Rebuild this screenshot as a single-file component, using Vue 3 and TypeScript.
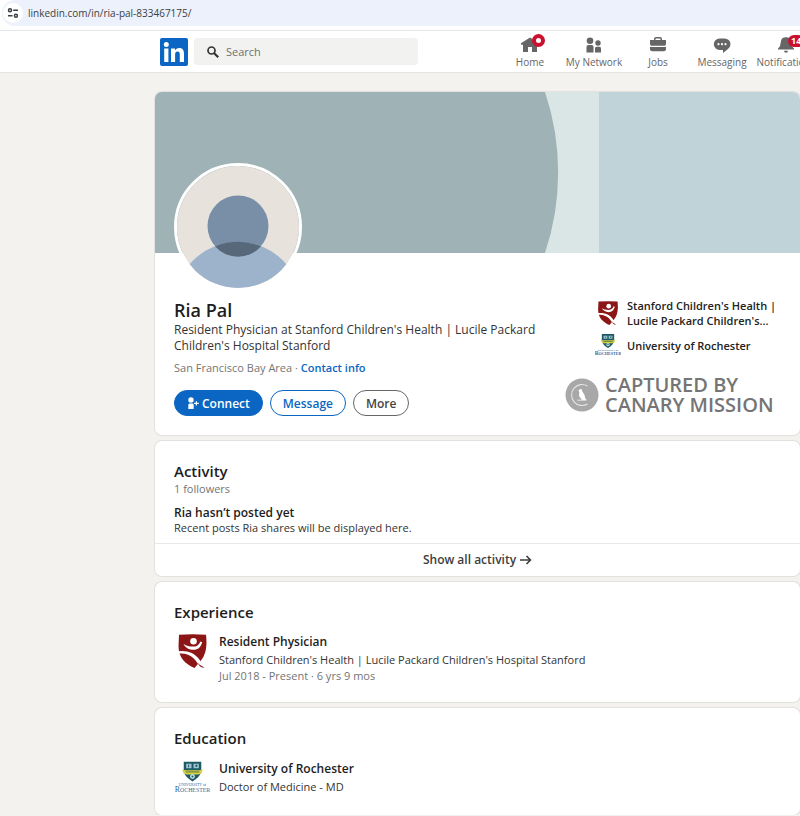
<script setup lang="ts">
import { ref } from 'vue'

interface NavItem {
  label: string
  icon: 'home' | 'network' | 'jobs' | 'messaging' | 'bell'
  badge?: string
}

const address = ref('linkedin.com/in/ria-pal-833467175/')
const query = ref('')

const navItems: NavItem[] = [
  { label: 'Home', icon: 'home', badge: '' },
  { label: 'My Network', icon: 'network' },
  { label: 'Jobs', icon: 'jobs' },
  { label: 'Messaging', icon: 'messaging' },
  { label: 'Notifications', icon: 'bell', badge: '14' },
]
</script>

<template>
  <svg class="symbols" aria-hidden="true">
    <symbol id="stanford" viewBox="0 0 30 34">
      <path fill="#8c1515" d="M1.500 .8Q15 -.2 28.500 .8C29.500 9 29.500 20 23 27L17 34C8 30 1 24 1 12z" />
      <circle cx="16" cy="7.300" r="3.300" fill="#fff" />
      <path fill="#fff" d="M6 10c3 2 6 2.600 9.500 2.600 3.500 0 6-1.500 7.500-5.200l1.700.8c-1.300 5-4.200 7.600-8.700 7.600-4.200 0-8-1.800-10-5.800z" />
      <path fill="#fff" d="M-1 17.500C8 15.500 17 18.500 21.500 25c1.700 2.500 3.500 5.500 6 7.500l-3.500 1.500c-3-2.500-5-7-8-9.800C12 20.500 6 18.500-1 20z" />
      <path fill="#8c1515" d="M20.500 29c1.800 2.200 3.800 3.200 6.500 4.300-3 .7-5.500-.8-6.500-4.300z" />
    </symbol>
    <symbol id="rochester-crest" viewBox="0 0 38 32">
      <path fill="#1d5a66" d="M10 0h18v8c0 6-4 9.500-9 12.500C14 17.500 10 14 10 8z" />
      <path fill="#9fc5d1" d="M12.500 2.500h5.500v4.500h-5.500zM20 2.500h5.500v4.500H20z" />
      <path fill="#1d5a66" d="M14.500 3.500h1v2.500h-1zM22 3.500h2v2h-2z" />
      <path fill="#d8cf45" d="M8.500 8l3 1h15l3-1-1 4-3 1.500H12.500l-3-1.500z" />
      <path fill="#6c8c3b" d="M12 10h14v1.500H12z" />
      <circle cx="19" cy="15.500" r="2.500" fill="#c7dde0" />
      <circle cx="19" cy="15.500" r="1" fill="#1d5a66" />
    </symbol>
  </svg>

  <div class="page">
    <div class="browser-bar">
      <div class="omnibox">
        <button class="site-info" type="button" aria-label="View site information">
          <svg viewBox="0 0 12 12" width="12" height="12" fill="none" stroke="#3c4043" stroke-width="1.500">
            <circle cx="3" cy="3.200" r="1.500" /><path d="M6.200 3.200H11M1 8.800h4.500" /><circle cx="8.900" cy="8.800" r="1.500" />
          </svg>
        </button>
        <input v-model="address" class="address" type="text" aria-label="Address" />
      </div>
    </div>

    <header class="site-header">
      <a class="logo" href="#" aria-label="LinkedIn">
        <svg viewBox="0 0 28 28" width="28" height="28">
          <rect width="28" height="28" rx="2" fill="#0a66c2" />
          <circle cx="6.300" cy="6.400" r="2.500" fill="#fff" />
          <path fill="#fff" d="M4.200 10.500h4.200V24H4.200zM11 10.500h4v1.900c.7-1.300 2.200-2.300 4.200-2.300 3.900 0 4.800 2.600 4.800 6.100V24h-4.200v-6.900c0-1.700-.1-3.500-2.200-3.500-2.200 0-2.500 1.700-2.500 3.400v7H11z" />
        </svg>
      </a>
      <label class="search">
        <svg viewBox="0 0 12 12" width="12" height="12" fill="none" stroke="#333">
          <circle cx="4.500" cy="4.500" r="3.500" stroke-width="1.700" /><path d="M7.200 7.200l4 4" stroke-width="2.200" />
        </svg>
        <input v-model="query" type="search" placeholder="Search" aria-label="Search" />
      </label>
      <nav class="nav">
        <a v-for="item in navItems" :key="item.label" class="nav-item" href="#">
          <span class="nav-icon">
            <svg v-if="item.icon === 'home'" viewBox="0 0 20 20" width="20" height="20" fill="#666">
              <path d="M10 2.500l9 5.700v1.600h-2V17h-5v-5H8v5H3V9.800H1V8.200z" />
            </svg>
            <svg v-else-if="item.icon === 'network'" viewBox="0 0 20 20" width="20" height="20" fill="#666">
              <circle cx="6" cy="5.700" r="3.300" /><path d="M2.500 17.500V12c0-1.200.8-2 2-2h3c1.200 0 2 .8 2 2v5.500z" />
              <circle cx="14" cy="8" r="2.700" /><path d="M11 17.500v-4c0-1 .7-1.700 1.700-1.700h2.600c1 0 1.700.7 1.700 1.700v4z" />
            </svg>
            <svg v-else-if="item.icon === 'jobs'" viewBox="0 0 20 20" width="20" height="20" fill="#666">
              <path fill-rule="evenodd" d="M14 5V4a2 2 0 0 0-2-2H8a2 2 0 0 0-2 2v1H2v4c0 1 .9 1.800 2 1.800h12c1.100 0 2-.8 2-1.800V5zM7.500 5V4c0-.4.200-.6.600-.6h3.800c.4 0 .6.200.6.600v1zM16 12H4c-.8 0-1.500-.2-2-.6V14c0 1.300 1 2.300 2.300 2.300h11.400c1.300 0 2.300-1 2.300-2.300v-2.600c-.5.400-1.200.6-2 .6z" />
            </svg>
            <svg v-else-if="item.icon === 'messaging'" viewBox="0 0 20 20" width="20" height="20" fill="#666">
              <path d="M12.500 3.500h-5a5.700 5.700 0 0 0 0 11.400H11V18l4.700-3.700a6.300 6.300 0 0 0 2.800-5.100 5.800 5.800 0 0 0-6-5.700z" />
              <g fill="#fff"><circle cx="6.500" cy="9.200" r="1.100" /><circle cx="10" cy="9.200" r="1.100" /><circle cx="13.500" cy="9.200" r="1.100" /></g>
            </svg>
            <svg v-else viewBox="0 0 20 20" width="20" height="20" fill="#666">
              <path d="M18 13.500v1H2v-1l2-2.300.9-4.800A5 5 0 0 1 9.800 2.200h.4a5 5 0 0 1 4.900 4.200l.9 4.800zM8 15.700h4a2 2 0 0 1-4 0z" />
            </svg>
            <span v-if="item.badge === ''" class="badge dot"></span>
            <span v-else-if="item.badge" class="badge count">{{ item.badge }}</span>
          </span>
          <span>{{ item.label }}</span>
        </a>
      </nav>
    </header>

    <main class="content">
      <section class="card profile">
        <svg class="banner" viewBox="0 0 645 161" preserveAspectRatio="xMinYMid slice" aria-hidden="true">
          <rect width="645" height="161" fill="#c0d3d8" />
          <rect width="444" height="161" fill="#dae6e5" />
          <path fill="#9fb2b5" d="M0 0h390a253 253 0 0 1 0 161H0z" />
        </svg>
        <div class="avatar">
          <svg viewBox="0 0 122 122" role="img" aria-label="Ria Pal">
            <rect width="122" height="122" fill="#e7e3dc" />
            <circle cx="61" cy="60" r="30.500" fill="#788fa7" />
            <circle cx="61" cy="140" r="64" fill="#9db3cb" />
            <path fill="#56687a" d="M38 80.200a64 64 0 0 1 46 0a30.500 30.500 0 0 1-46 0z" />
          </svg>
        </div>
        <div class="profile-body">
          <div class="identity">
            <h1>Ria Pal</h1>
            <p class="headline">Resident Physician at Stanford Children's Health | Lucile Packard Children's Hospital Stanford</p>
            <p class="location">San Francisco Bay Area · <a href="#">Contact info</a></p>
            <div class="actions">
              <button class="btn primary" type="button">
                <svg viewBox="0 0 12 12" width="12" height="12" fill="#fff">
                  <circle cx="4" cy="3" r="2.700" /><path d="M1.300 12V8c0-1 .6-1.600 1.600-1.600h2.200c1 0 1.600.6 1.600 1.600v4zM8.800 4.200h1.200v1.600h1.800V7H10v1.600H8.800V7H7V5.800h1.800z" />
                </svg>
                Connect
              </button>
              <button class="btn outline" type="button">Message</button>
              <button class="btn neutral" type="button">More</button>
            </div>
          </div>
          <aside class="side">
            <ul class="affiliations">
              <li>
                <svg width="26" height="24"><use href="#stanford" /></svg>
                <a href="#">Stanford Children's Health |<br />Lucile Packard Children's...</a>
              </li>
              <li>
                <svg class="crest" viewBox="0 0 38 32" width="26" height="22">
                  <use href="#rochester-crest" width="38" height="32" />
                  <text x="19" y="25" font-size="4">UNIVERSITY of</text>
                  <text x="19" y="31" font-size="8">R<tspan font-size="6">OCHESTER</tspan></text>
                </svg>
                <a href="#">University of Rochester</a>
              </li>
            </ul>
            <div class="capture">
              <svg viewBox="0 0 34 34" width="34" height="34">
                <circle cx="17" cy="17" r="16.500" fill="#a8a8a8" />
                <path d="M22.500 8a10.500 10.500 0 1 0 0 18" fill="none" stroke="#e4e4e4" stroke-width="1.100" />
                <path fill="#fff" d="M13.300 12.600l1-.5c.4-1.500 2.400-1.500 2.700.1.100 1 .5 1.700 1.300 2.700 1.300 1.800 1.600 3.200 2 5.600l1.200 1.200v.9h-9.200v-.9h4.400l-.6-1.100c-1.800-1.200-2.300-3-1.900-5.100.2-1 .1-1.900-.9-2.900z" />
              </svg>
              <p>CAPTURED BY<br />CANARY MISSION</p>
            </div>
          </aside>
        </div>
      </section>

      <section class="card activity">
        <div class="card-body">
          <h2>Activity</h2>
          <p class="followers">1 followers</p>
          <h3>Ria hasn’t posted yet</h3>
          <p class="note">Recent posts Ria shares will be displayed here.</p>
        </div>
        <a class="show-all" href="#">
          Show all activity
          <svg viewBox="0 0 12 10" width="12" height="10" fill="none" stroke="#3d3d3d" stroke-width="1.600"><path d="M0 5h10.500M6.500 1l4 4-4 4" /></svg>
        </a>
      </section>

      <section class="card card-body">
        <h2>Experience</h2>
        <div class="entry">
          <svg width="37" height="34"><use href="#stanford" /></svg>
          <div>
            <h3>Resident Physician</h3>
            <p>Stanford Children's Health | Lucile Packard Children's Hospital Stanford</p>
            <p class="muted">Jul 2018 - Present · 6 yrs 9 mos</p>
          </div>
        </div>
      </section>

      <section class="card card-body education">
        <h2>Education</h2>
        <div class="entry">
          <svg class="crest" viewBox="0 0 38 32" width="37" height="32">
            <use href="#rochester-crest" width="38" height="32" />
            <text x="19" y="25" font-size="4">UNIVERSITY of</text>
            <text x="19" y="31" font-size="8">R<tspan font-size="6">OCHESTER</tspan></text>
          </svg>
          <div>
            <h3>University of Rochester</h3>
            <p>Doctor of Medicine - MD</p>
          </div>
        </div>
      </section>
    </main>
  </div>
</template>

<style>
body {
  margin: 0;
  background: #f3f2ee;
}
</style>

<style scoped>
* {
  box-sizing: border-box;
}
.symbols {
  position: absolute;
  width: 0;
  height: 0;
}
.crest text {
  font-family: "Liberation Serif", serif;
  text-anchor: middle;
  fill: #2f6a9c;
}
.page {
  font-family: "Open Sans", "Noto Sans", sans-serif;
  font-size: 11px;
  line-height: 16px;
  color: #333;
  overflow-x: hidden;
}
h1,
h2,
h3,
p,
ul {
  margin: 0;
  padding: 0;
}
h1,
h2,
h3 {
  font-weight: 600;
  color: #1d1d1d;
}
a {
  color: inherit;
  text-decoration: none;
}
svg {
  flex: none;
}
input {
  min-width: 0;
  border: 0;
  padding: 0;
  outline: 0;
  background: none;
  font: inherit;
}

.browser-bar {
  height: 31px;
  padding-left: 2px;
  background: #fff;
  border-bottom: 1px solid #e3e6ea;
}
.omnibox {
  display: flex;
  align-items: center;
  gap: 5px;
  height: 26px;
  padding-left: 1px;
  background: #edf1fb;
  border-radius: 13px 0 0 13px;
}
.site-info {
  display: grid;
  place-items: center;
  width: 20px;
  height: 20px;
  padding: 0;
  border: 0;
  border-radius: 50%;
  background: #fff;
}
.address {
  flex: 1;
  font-size: 10px;
  color: #3c3f43;
}

.site-header {
  display: flex;
  align-items: center;
  height: 42px;
  padding-left: 160px;
  background: #fff;
  border-bottom: 1px solid #e6e5e2;
}
.logo {
  display: flex;
}
.search {
  display: flex;
  flex: none;
  align-items: center;
  gap: 7px;
  width: 224px;
  height: 27px;
  margin-left: 6px;
  padding: 0 13px;
  background: #f2f2f1;
  border-radius: 3px;
}
.search input {
  flex: 1;
}
.search input::placeholder {
  color: #707070;
}
.nav {
  display: flex;
  margin-left: 80px;
}
.nav-item {
  display: flex;
  flex: none;
  flex-direction: column;
  align-items: center;
  width: 64px;
  font-size: 10px;
  line-height: 14px;
  color: #666;
  white-space: nowrap;
}
.nav-icon {
  position: relative;
  display: flex;
}
.badge {
  position: absolute;
  background: #cb112d;
  color: #fff;
}
.dot {
  top: -1px;
  left: 12px;
  width: 13px;
  height: 13px;
  border: 4px solid #cb112d;
  border-radius: 50%;
  background: #fff;
}
.count {
  top: 0;
  left: 12px;
  padding: 0 3px;
  border-radius: 6px;
  font-size: 9px;
  font-weight: 700;
  line-height: 12px;
}

.content {
  display: flex;
  flex-direction: column;
  gap: 6px;
  padding: 19px 0 0 155px;
}
.card {
  background: #fff;
  border-radius: 7px;
  box-shadow: 0 0 0 1px #e3e1dd;
  overflow: hidden;
}
.card-body {
  padding: 20px 19px 18px;
}
h2 {
  font-size: 15px;
  line-height: 20px;
}
h3 {
  font-size: 12px;
}

.banner {
  display: block;
  width: 100%;
  height: 161px;
}
.profile {
  position: relative;
}
.avatar {
  position: absolute;
  top: 71px;
  left: 19px;
  width: 128px;
  height: 128px;
  border: 3px solid #fff;
  border-radius: 50%;
  overflow: hidden;
}
.avatar svg {
  display: block;
}
.profile-body {
  display: flex;
  justify-content: space-between;
  gap: 16px;
  padding: 45px 19px 19px;
}
h1 {
  font-size: 18px;
  line-height: 24px;
}
.headline {
  max-width: 370px;
  font-size: 12px;
}
.location {
  margin-top: 6px;
  color: #757575;
}
.location a {
  font-weight: 600;
  color: #0a66c2;
}
.actions {
  display: flex;
  gap: 7px;
  margin-top: 14px;
}
.btn {
  display: flex;
  align-items: center;
  gap: 3px;
  height: 26px;
  padding: 0 12px;
  border: 1px solid #0a66c2;
  border-radius: 13px;
  background: #fff;
  color: #0a66c2;
  font: 600 12px "Open Sans", "Noto Sans", sans-serif;
}
.primary {
  background: #0a66c2;
  color: #fff;
}
.neutral {
  border-color: #666;
  color: #444;
}

.side {
  width: 216px;
}
.affiliations {
  display: grid;
  gap: 6px;
  padding-left: 30px;
  list-style: none;
}
.affiliations li {
  display: flex;
  align-items: center;
  gap: 6px;
  font-weight: 600;
  line-height: 15px;
  color: #222;
  white-space: nowrap;
}
.capture {
  display: flex;
  align-items: center;
  gap: 6px;
  margin-top: 19px;
  color: #757575;
  font-size: 20px;
  font-weight: 600;
  line-height: 20px;
  white-space: nowrap;
}

.activity .card-body {
  padding-bottom: 8px;
}
.followers {
  color: #757575;
}
.activity h3 {
  margin-top: 8px;
}
.note {
  line-height: 14px;
}
.show-all {
  display: flex;
  align-items: center;
  justify-content: center;
  gap: 4px;
  height: 33px;
  border-top: 1px solid #e8e8e8;
  font-size: 12px;
  font-weight: 600;
  color: #3d3d3d;
}

.entry {
  display: flex;
  gap: 8px;
  margin-top: 12px;
}
.entry h3 {
  margin-bottom: 2px;
}
.education {
  padding-bottom: 20px;
}
.education .entry {
  margin-top: 13px;
}
.muted {
  color: #757575;
}
</style>
